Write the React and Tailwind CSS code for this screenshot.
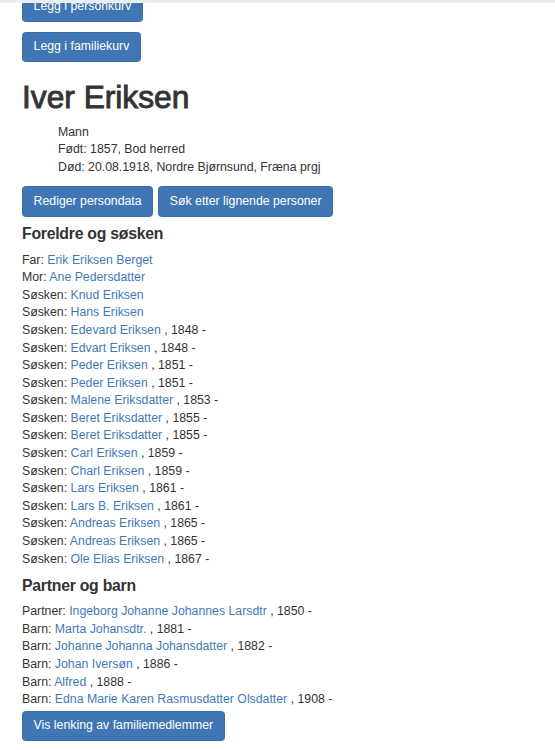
import React from 'react';

const siblings = [
  { role: 'Far', name: 'Erik Eriksen Berget' },
  { role: 'Mor', name: 'Ane Pedersdatter' },
  { role: 'Søsken', name: 'Knud Eriksen' },
  { role: 'Søsken', name: 'Hans Eriksen' },
  { role: 'Søsken', name: 'Edevard Eriksen', year: '1848' },
  { role: 'Søsken', name: 'Edvart Eriksen', year: '1848' },
  { role: 'Søsken', name: 'Peder Eriksen', year: '1851' },
  { role: 'Søsken', name: 'Peder Eriksen', year: '1851' },
  { role: 'Søsken', name: 'Malene Eriksdatter', year: '1853' },
  { role: 'Søsken', name: 'Beret Eriksdatter', year: '1855' },
  { role: 'Søsken', name: 'Beret Eriksdatter', year: '1855' },
  { role: 'Søsken', name: 'Carl Eriksen', year: '1859' },
  { role: 'Søsken', name: 'Charl Eriksen', year: '1859' },
  { role: 'Søsken', name: 'Lars Eriksen', year: '1861' },
  { role: 'Søsken', name: 'Lars B. Eriksen', year: '1861' },
  { role: 'Søsken', name: 'Andreas Eriksen', year: '1865' },
  { role: 'Søsken', name: 'Andreas Eriksen', year: '1865' },
  { role: 'Søsken', name: 'Ole Elias Eriksen', year: '1867' },
];

const family = [
  { role: 'Partner', name: 'Ingeborg Johanne Johannes Larsdtr', year: '1850' },
  { role: 'Barn', name: 'Marta Johansdtr.', year: '1881' },
  { role: 'Barn', name: 'Johanne Johanna Johansdatter', year: '1882' },
  { role: 'Barn', name: 'Johan Iversøn', year: '1886' },
  { role: 'Barn', name: 'Alfred', year: '1888' },
  { role: 'Barn', name: 'Edna Marie Karen Rasmusdatter Olsdatter', year: '1908' },
];

const Btn = ({ children }) => (
  <button className="inline-block bg-[#4076b3] border border-[#3a6ca5] text-white text-[12.3px] leading-[17.6px] px-[10.6px] py-[5.3px] rounded-[3.5px] cursor-pointer">
    {children}
  </button>
);

const Row = ({ p }) => (
  <div className="leading-[17.6px]">
    {p.role}: <a href="#" className="text-[#3f7ab8]">{p.name}</a>
    {p.year && <span> , {p.year} -</span>}
  </div>
);

export default function App() {
  return (
    <div className="min-h-[750px] bg-white text-[#333] text-[12.3px] leading-[17.6px] font-['Liberation_Sans',Arial,sans-serif] overflow-hidden">
      <div className="relative z-10 h-[3px] bg-[#e8edf1] border-b border-[#f2f4f6]" />
      <div className="px-[22px] mt-[-11px]">
        <div>
          <Btn>Legg i personkurv</Btn>
        </div>
        <div className="mt-[10px]">
          <Btn>Legg i familiekurv</Btn>
        </div>

        <h1 className="mt-[17.6px] mb-[8.8px] text-[31.7px] leading-[34.8px] font-normal text-[#333] [-webkit-text-stroke:0.9px_#333]">Iver Eriksen</h1>

        <div className="ml-[36px]">
          <div>Mann</div>
          <div>Født: 1857, Bod herred</div>
          <div>Død: 20.08.1918, Nordre Bjørnsund, Fræna prgj</div>
        </div>

        <div className="mt-[10px] flex gap-[5px]">
          <Btn>Rediger persondata</Btn>
          <Btn>Søk etter lignende personer</Btn>
        </div>

        <h4 className="mt-[8.8px] mb-[8.8px] text-[15.8px] leading-[17.4px] font-semibold tracking-[-0.25px]">Foreldre og søsken</h4>
        <div>
          {siblings.map((p, i) => (
            <Row key={i} p={p} />
          ))}
        </div>

        <h4 className="mt-[8.8px] mb-[8.8px] text-[15.8px] leading-[17.4px] font-semibold tracking-[-0.25px]">Partner og barn</h4>
        <div>
          {family.map((p, i) => (
            <Row key={i} p={p} />
          ))}
        </div>

        <div className="mt-[2px]">
          <Btn>Vis lenking av familiemedlemmer</Btn>
        </div>
      </div>
    </div>
  );
}
